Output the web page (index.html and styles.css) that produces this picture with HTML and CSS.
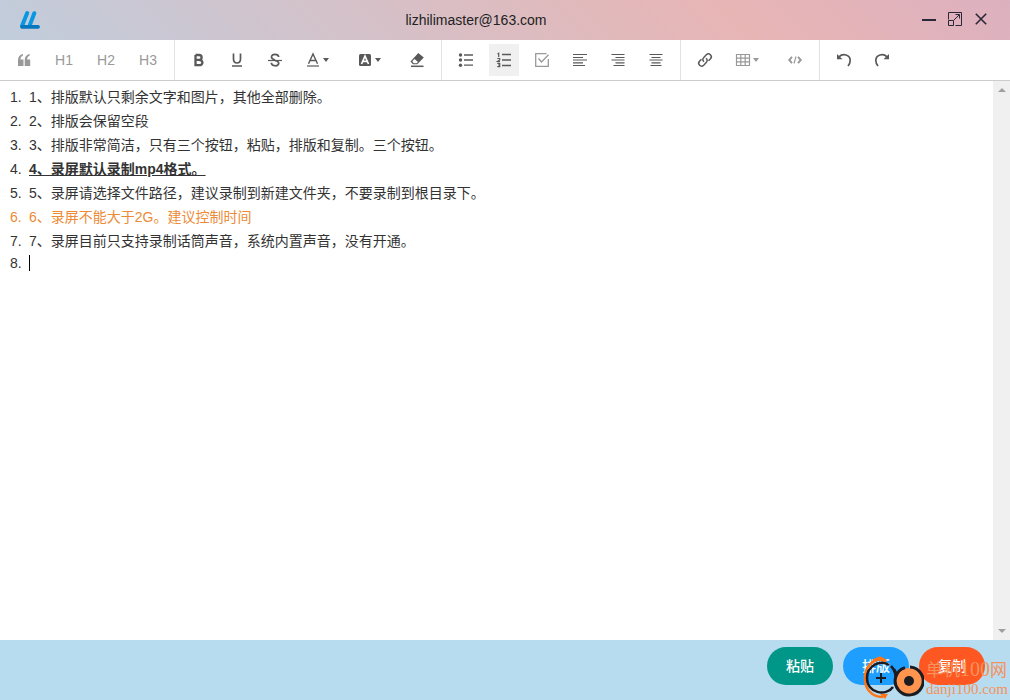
FILE: index.html
```html
<!DOCTYPE html>
<html lang="zh-CN">
<head>
<meta charset="utf-8">
<title>lizhilimaster@163.com</title>
<link rel="stylesheet" href="styles.css">
</head>
<body>
<div class="app">
  <header class="titlebar">
    <svg class="logo" viewBox="0 0 20 18" aria-hidden="true">
      <g stroke-linecap="round" fill="none">
        <path d="M7.200 2 2.200 14.500" stroke="#0a97e2" stroke-width="4"/>
        <path d="M14.300 2.200 10 13.600" stroke="#0a97e2" stroke-width="4"/>
        <path d="M2 15.800H18" stroke="#0676bd" stroke-width="3.800"/>
      </g>
    </svg>
    <h1 class="title">lizhilimaster@163.com</h1>
    <div class="window-controls">
      <button class="window-button" type="button" aria-label="最小化"><svg viewBox="0 0 18 18"><path d="M2 9H16" stroke-width="2"/></svg></button>
      <button class="window-button" type="button" aria-label="最大化"><svg viewBox="0 0 18 18"><path d="M2.500 8.500V1.500H15.500V14.500H9.500M2.500 9.500H7.500V14.500H2.500ZM8 9 13 4M9.500 3.500H13.500V7.500"/></svg></button>
      <button class="window-button" type="button" aria-label="关闭"><svg viewBox="0 0 18 18"><path d="M3.800 2.800 14.200 13.200M14.200 2.800 3.800 13.200" stroke-width="1.600"/></svg></button>
    </div>
  </header>

  <div class="toolbar" role="toolbar" aria-label="格式">
    <div class="tool-group">
      <button class="tool muted" type="button" aria-label="引用"><svg viewBox="0 0 18 18"><path class="solid" d="M3 9.500C3 6 4.500 3.800 8 3V4.500C6.300 5.300 5.500 6.400 5.500 8.500H8.500V15H3ZM9.700 9.500C9.700 6 11.200 3.800 14.700 3V4.500C13 5.300 12.200 6.400 12.200 8.500H15.200V15H9.700Z"/></svg></button>
      <button class="tool heading muted" type="button">H1</button>
      <button class="tool heading muted" type="button">H2</button>
      <button class="tool heading muted" type="button">H3</button>
    </div>
    <div class="tool-group">
      <button class="tool" type="button" aria-label="加粗"><svg viewBox="0 0 18 18"><path d="M5.500 4H9C12.500 4 12.500 8.800 9 8.800H5.500M9 8.800C13.500 8.800 13.500 14.200 9.300 14.200H5.500V4" stroke-width="2.300"/></svg></button>
      <button class="tool" type="button" aria-label="下划线"><svg viewBox="0 0 18 18"><path d="M5.500 2.500V8C5.500 13.300 12.500 13.300 12.500 8V2.500" stroke-width="1.700"/><path d="M4 15H14" stroke-width="1.500"/></svg></button>
      <button class="tool" type="button" aria-label="删除线"><svg viewBox="0 0 18 18"><path d="M12.700 6C12.300 2.500 5.500 2.500 5.500 6 5.500 7.500 7 8.300 9 9M9 9.500C11.300 10 12.800 11 12.700 12.200 12.500 15.700 5.500 15.700 5.300 11.800" stroke-width="1.700"/><path d="M2 9.500H16" stroke-width="1.200"/></svg></button>
      <button class="tool dropdown" type="button" aria-label="文字颜色"><svg viewBox="0 0 18 18"><path d="M4.500 12.800 9 3 13.500 12.800M6.300 9.500H11.700" stroke-width="1.400"/><path d="M3 15H15" stroke-width="1.200"/></svg><span class="caret"></span></button>
      <button class="tool dropdown" type="button" aria-label="背景颜色"><svg viewBox="0 0 18 18"><rect class="solid" x="3" y="3" width="12" height="12" rx="1.500"/><path class="light" d="M5.500 13 9 5 12.500 13M7 10.300H11" stroke-width="1.700"/></svg><span class="caret"></span></button>
      <button class="tool" type="button" aria-label="清除格式"><svg viewBox="0 0 18 18"><path class="solid" d="M10.300 2 15.800 6.500 9.300 13.200H5L2.500 10.500Z"/><path class="fill-light" d="M6.500 8 10 11 8.700 12.200H5.700L4.300 10.300Z"/><path d="M3 15.300H15.500" stroke-width="1.500"/></svg></button>
    </div>
    <div class="tool-group">
      <button class="tool" type="button" aria-label="无序列表"><svg viewBox="0 0 18 18"><path d="M7 4H16M7 9H16M7 14.200H16" stroke-width="1.300"/><g class="solid"><circle cx="3.500" cy="4" r="1.700"/><circle cx="3.500" cy="9" r="1.700"/><circle cx="3.500" cy="14.200" r="1.700"/></g></svg></button>
      <button class="tool active" type="button" aria-label="有序列表" aria-pressed="true"><svg viewBox="0 0 18 18"><path d="M7 3.500H16M7 9H16M7 14.500H16" stroke-width="1.400"/><path d="M2.500 3 3.700 2.300V6M2.300 7.500H4.700V9L2.500 10.500H5M2.300 12.300H4.700V15.700H2.300M3 14H4.600" stroke-width="1.200"/></svg></button>
      <button class="tool muted" type="button" aria-label="待办列表"><svg viewBox="0 0 18 18"><path d="M13.500 2.700H2.700V15.300H15.300V8M5.500 7.500 8.500 11 15.500 3.700" stroke-width="1.300"/></svg></button>
      <button class="tool" type="button" aria-label="左对齐"><svg viewBox="0 0 18 18"><path d="M2 3.500H16M2 6.500H12M2 9H16M2 11.800H12M2 14.500H14" stroke-width="1.200"/></svg></button>
      <button class="tool" type="button" aria-label="右对齐"><svg viewBox="0 0 18 18"><path d="M2.500 3.500H15.500M6.500 6.500H15.500M2.500 9H15.500M6.500 11.800H15.500M4.500 14.500H15.500" stroke-width="1.200"/></svg></button>
      <button class="tool" type="button" aria-label="居中"><svg viewBox="0 0 18 18"><path d="M2.500 3.500H15.500M4.500 6.500H13.500M2.500 9H15.500M4.500 11.800H13.500M3.500 14.500H14.500" stroke-width="1.200"/></svg></button>
    </div>
    <div class="tool-group">
      <button class="tool" type="button" aria-label="链接"><svg viewBox="0 0 18 18"><path d="M8 10.800C6.300 9.300 6.600 7.700 7.800 6.500L10.300 3.800C13 1.300 17 4.800 14.500 7.700L12.500 9.700M10 7.200C11.700 8.700 11.400 10.300 10.200 11.500L7.700 14.200C5 16.700 1 13.200 3.500 10.300L5.500 8.300" stroke-width="1.500"/></svg></button>
      <button class="tool dropdown muted" type="button" aria-label="表格"><svg viewBox="0 0 18 18"><path d="M2.500 3.500H15.500V14.500H2.500ZM2.500 7.200H15.500M2.500 10.800H15.500M6.800 3.500V14.500M11.200 3.500V14.500" stroke-width="1.200"/></svg><span class="caret"></span></button>
      <button class="tool muted" type="button" aria-label="代码"><svg viewBox="0 0 18 18"><path d="M6 5.800 3.200 9 6 12.200M12 5.800 14.800 9 12 12.200" stroke-width="1.900"/><path d="M10 5.500 8 12.500" stroke-width="1.100"/></svg></button>
    </div>
    <div class="tool-group">
      <button class="tool" type="button" aria-label="撤销"><svg viewBox="0 0 18 18"><path d="M4 5.800C8 1.800 15.200 3.800 15.200 9.500 15.200 12 14.300 13.500 13 15" stroke-width="1.700"/><path class="solid" d="M2 3V8.300H7.500Z"/></svg></button>
      <button class="tool" type="button" aria-label="重做"><svg viewBox="0 0 18 18"><path d="M14 5.800C10 1.800 2.800 3.800 2.800 9.500 2.800 12 3.700 13.500 5 15" stroke-width="1.700"/><path class="solid" d="M16 3V8.300H10.500Z"/></svg></button>
    </div>
  </div>

  <main class="workspace">
    <div class="editor" contenteditable="true" role="textbox" aria-multiline="true" aria-label="正文">
      <ol class="lines">
        <li>1、排版默认只剩余文字和图片，其他全部删除。</li>
        <li>2、排版会保留空段</li>
        <li>3、排版非常简洁，只有三个按钮，粘贴，排版和复制。三个按钮。</li>
        <li><strong class="underlined">4、录屏默认录制mp4格式。</strong></li>
        <li>5、录屏请选择文件路径，建议录制到新建文件夹，不要录制到根目录下。</li>
        <li class="orange">6、录屏不能大于2G。建议控制时间</li>
        <li>7、录屏目前只支持录制话筒声音，系统内置声音，没有开通。</li>
        <li class="empty"><span class="cursor"></span></li>
      </ol>
    </div>
    <div class="scrollbar" aria-hidden="true">
      <span class="arrow-up"></span>
      <span class="arrow-down"></span>
    </div>
  </main>

  <footer class="actions">
    <button class="action paste" type="button">粘贴</button>
    <button class="action format" type="button">排版</button>
    <button class="action copy" type="button">复制</button>
    <div class="watermark">
      <svg class="watermark-logo" viewBox="0 0 62 44" aria-hidden="true">
        <g fill="none">
          <path d="M24 6C16-1 4 8 3 20 2 32 9 41 21 41" stroke="#ff7414" stroke-width="2.500"/>
          <path d="M11 5 18 2 24 5" stroke="#ff7414" stroke-width="3"/>
          <path d="M18 38 26 38 23 43Z" fill="#ff7414"/>
          <path d="M27 9C18 3 5 10 5 22 5 37 24 41 31 31" stroke="#1b1b22" stroke-width="2.500"/>
          <path d="M29 10C32 13 34 17 34 25" stroke="#1b1b22" stroke-width="2.500"/>
          <path d="M14 22H24M19 17V27" stroke="#1b1b22" stroke-width="2"/>
          <path d="M32 13 36 20M41 14 37 19" stroke="#1b1b22" stroke-width="2.500"/>
        </g>
        <circle cx="47" cy="25" r="13" fill="#ff944f"/>
        <path d="M43 11.600A14 14 0 1 0 48 11" fill="none" stroke="#1b1b22" stroke-width="3"/>
        <circle cx="47" cy="25" r="5" fill="#1b1b22"/>
      </svg>
      <div class="watermark-text">
        <span class="watermark-name">单机<span class="watermark-number">100</span>网</span>
        <span class="watermark-site">danji100.com</span>
      </div>
    </div>
  </footer>
</div>
</body>
</html>
```

FILE: styles.css
```css
* {
  box-sizing: border-box;
}

body {
  margin: 0;
  font: 14px/24px "Liberation Sans", Arial, "Noto Sans CJK SC", sans-serif;
  color: #333;
}

button {
  margin: 0;
  padding: 0;
  border: 0;
  background: none;
  font: inherit;
  color: inherit;
}

.app {
  display: flex;
  flex-direction: column;
  min-height: 100vh;
  background: #fff;
}

.titlebar {
  display: flex;
  align-items: center;
  height: 40px;
  padding: 0 16px 0 20px;
  background: linear-gradient(45deg, #c1cddc 0%, #e8b5b5 72%, #dcb1bf 100%);
}

.logo {
  width: 20px;
  height: 18px;
}

.title {
  flex: 1;
  margin: 0;
  font-size: 14px;
  font-weight: 400;
  text-align: center;
  color: #222;
}

.window-controls {
  display: flex;
  padding-left: 4px;
}

.window-button {
  display: flex;
  align-items: center;
  justify-content: center;
  width: 26px;
  height: 40px;
  color: #2b2638;
}

.window-button svg,
.tool svg {
  flex: none;
  width: 18px;
  height: 18px;
  fill: none;
  stroke: currentColor;
}

.toolbar {
  display: flex;
  border-bottom: 1px solid #ccc;
}

.tool-group {
  display: flex;
  gap: 8px;
  padding: 4px 9px;
}

.tool-group + .tool-group {
  border-left: 1px solid #e2e2e2;
}

.tool {
  display: flex;
  align-items: center;
  justify-content: center;
  width: 30px;
  height: 32px;
  color: #595959;
}

.tool.heading {
  width: 34px;
}

.tool.dropdown {
  justify-content: flex-start;
  gap: 1px;
  width: 44px;
  padding-left: 6px;
}

.tool.muted {
  color: #999;
}

.tool.active {
  background: #f0f0f0;
}

.tool .solid {
  fill: currentColor;
  stroke: none;
}

.tool .light {
  stroke: #fff;
}

.tool .fill-light {
  fill: #fff;
  stroke: none;
}

.caret {
  border: 3px solid transparent;
  border-top: 4px solid currentColor;
  border-bottom: 0;
}

.workspace {
  display: flex;
  flex: 1;
}

.editor {
  flex: 1;
  padding: 4px 10px;
  outline: none;
}

.lines {
  margin: 0;
  padding: 0;
  list-style: none;
  counter-reset: line;
}

.lines li {
  display: flex;
  counter-increment: line;
}

.lines li::before {
  content: counter(line) ".";
  flex: none;
  width: 19px;
}

.lines .orange {
  color: #ed8b37;
}

.lines .empty {
  align-items: center;
  line-height: 20px;
}

.underlined {
  text-decoration: underline;
}

.cursor {
  width: 1px;
  height: 16px;
  background: #000;
}

.scrollbar {
  display: flex;
  flex-direction: column;
  align-items: center;
  justify-content: space-between;
  width: 17px;
  padding: 7px 0;
  background: #f0f0f0;
}

.arrow-up,
.arrow-down {
  border: 4px solid transparent;
}

.arrow-up {
  border-top: 0;
  border-bottom-color: #a0a0a0;
}

.arrow-down {
  border-bottom: 0;
  border-top-color: #a0a0a0;
}

.actions {
  position: relative;
  display: flex;
  align-items: flex-start;
  justify-content: flex-end;
  gap: 10px;
  height: 60px;
  padding: 7px 25px;
  background: #b7dcef;
}

.action {
  width: 66px;
  height: 38px;
  border-radius: 19px;
  font-weight: 500;
  color: #fff;
}

.paste {
  background: #009688;
}

.format {
  background: #1e9fff;
}

.copy {
  background: #ff5722;
}

.watermark {
  position: absolute;
  right: 2px;
  bottom: 0;
  display: flex;
  align-items: flex-end;
  gap: 2px;
  pointer-events: none;
}

.watermark-logo {
  width: 62px;
  height: 44px;
}

.watermark-text {
  display: flex;
  flex-direction: column;
  padding-bottom: 2px;
  font-family: "Liberation Serif", "Noto Sans CJK SC", serif;
  color: #f5935b;
}

.watermark-name {
  font-size: 17px;
  line-height: 20px;
}

.watermark-number {
  font-size: 20px;
}

.watermark-site {
  font-size: 15px;
  line-height: 17px;
}
```
